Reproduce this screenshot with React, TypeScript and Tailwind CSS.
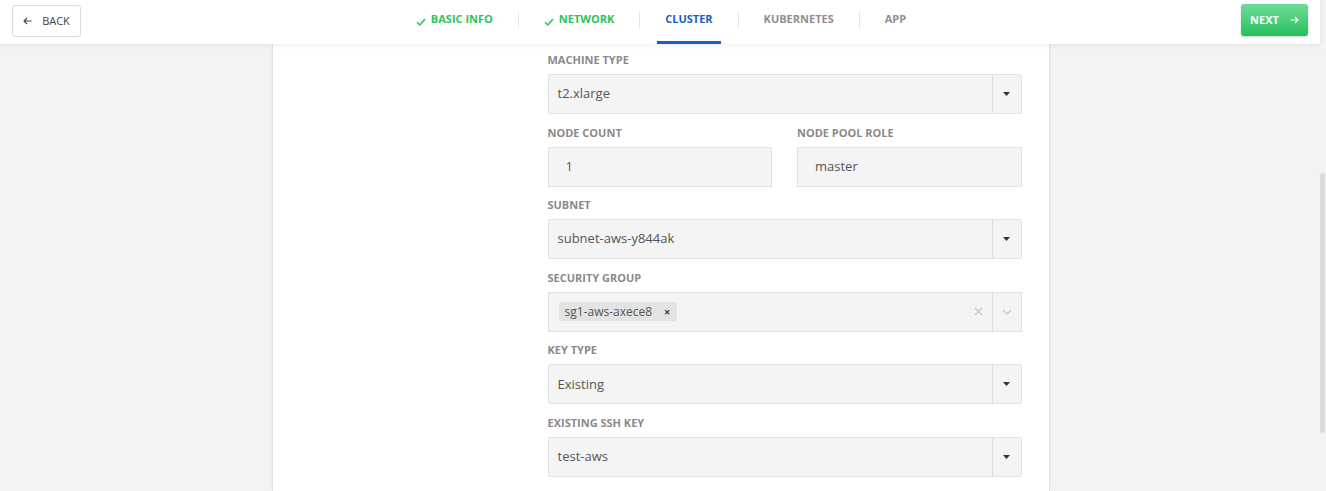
import React from 'react'

const font = { fontFamily: '"Open Sans", "Noto Sans", sans-serif' }

const Check = () => (
  <svg width="10" height="8" viewBox="0 0 10 8" className="mr-[5px]">
    <path d="M1 4.2 L3.8 7 L9 1" fill="none" stroke="currentColor" strokeWidth="1.6" />
  </svg>
)

const Caret = () => (
  <svg width="7" height="4" viewBox="0 0 7 4">
    <path d="M0 0 H7 L3.5 4 Z" fill="#333" />
  </svg>
)

const Label: React.FC<{ children: React.ReactNode }> = ({ children }) => (
  <div className="text-[11px] font-bold uppercase text-[#8a8a8a] leading-[14px] mb-[7px]">{children}</div>
)

const Select: React.FC<{ value: string }> = ({ value }) => (
  <div className="flex h-[40px] border border-[#e2e2e2] bg-[#f4f4f4] rounded-[2px]">
    <div className="flex-1 flex items-center pl-[9px] text-[13px] text-[#555]">{value}</div>
    <div className="w-[29px] border-l border-[#dcdcdc] flex items-center justify-center">
      <Caret />
    </div>
  </div>
)

const Field: React.FC<{ label: string; children: React.ReactNode }> = ({ label, children }) => (
  <div className="mb-[11.6px]">
    <Label>{label}</Label>
    {children}
  </div>
)

const Tab: React.FC<{ label: string; state: 'done' | 'active' | 'todo'; last?: boolean }> = ({ label, state, last }) => (
  <div className="flex items-center h-[44px]">
    <div
      className={
        'relative flex items-center h-full px-[8px] text-[11px] font-bold ' +
        (state === 'done' ? 'text-[#2fc35e]' : state === 'active' ? 'text-[#1a5fc7]' : 'text-[#8f8f8f]')
      }
    >
      {state === 'done' && <Check />}
      <span className="-mt-[5px] flex items-center">{label}</span>
      {state === 'active' && <div className="absolute left-0 right-0 bottom-0 h-[3px] bg-[#1a5fc7]" />}
    </div>
    {!last && <div className="w-px h-[16px] bg-[#e4e4e4] mx-[17px] -mt-[5px]" />}
  </div>
)

export default function App() {
  return (
    <div className="flex w-[1326px] h-[491px] bg-[#f3f3f3] overflow-hidden" style={font}>
      <div className="w-[1320px] flex flex-col">
        {/* header */}
        <div className="relative z-10 h-[44px] bg-white shadow-[0_1px_6px_rgba(0,0,0,0.08)] flex items-start justify-between px-[12px]">
          <button className="mt-[5px] w-[69px] h-[32px] border border-[#dcdcdc] rounded-[3px] flex items-center justify-center gap-[10px] text-[11px] text-[#444]">
            <svg width="9" height="8" viewBox="0 0 9 8">
              <path d="M8.5 4 H1 M4 1 L1 4 L4 7" fill="none" stroke="#444" strokeWidth="1.1" />
            </svg>
            BACK
          </button>
          <div className="flex">
            <Tab label="BASIC INFO" state="done" />
            <Tab label="NETWORK" state="done" />
            <Tab label="CLUSTER" state="active" />
            <Tab label="KUBERNETES" state="todo" />
            <Tab label="APP" state="todo" last />
          </div>
          <button className="mt-[4px] w-[67px] h-[32px] rounded-[3px] bg-gradient-to-b from-[#6ddc95] to-[#1ec05f] shadow-[0_1px_2px_rgba(0,0,0,0.2)] flex items-center justify-center gap-[11px] text-[11px] font-bold text-white">
            NEXT
            <svg width="9" height="8" viewBox="0 0 9 8">
              <path d="M0.5 4 H8 M5 1 L8 4 L5 7" fill="none" stroke="white" strokeWidth="1.2" />
            </svg>
          </button>
        </div>

        {/* body */}
        <div className="flex-1 flex justify-center">
          <div className="ml-[1px] w-[778px] bg-white border-x border-[#e3e3e3] shadow-[0_0_4px_rgba(0,0,0,0.04)] pl-[275px] pr-[27px] pt-[9px]">
            <Field label="Machine Type">
              <Select value="t2.xlarge" />
            </Field>
            <div className="grid grid-cols-2 gap-x-[25px]">
              <Field label="Node Count">
                <div className="h-[40px] border border-[#e2e2e2] bg-[#f4f4f4] flex items-center pl-[17px] text-[13px] text-[#555]">1</div>
              </Field>
              <Field label="Node Pool Role">
                <div className="h-[40px] border border-[#e2e2e2] bg-[#f4f4f4] flex items-center pl-[17px] text-[13px] text-[#555]">master</div>
              </Field>
            </div>
            <Field label="Subnet">
              <Select value="subnet-aws-y844ak" />
            </Field>
            <Field label="Security Group">
              <div className="flex h-[40px] border border-[#e2e2e2] bg-[#f4f4f4]">
                <div className="flex-1 flex items-center pl-[10px]">
                  <span className="flex items-center h-[19px] bg-[#e3e3e3] rounded-[2px] pl-[6px] pr-[7px] text-[12px] text-[#555]">
                    sg1-aws-axece8
                    <span className="ml-[12px] text-[11px] font-bold text-[#333]">×</span>
                  </span>
                </div>
                <div className="w-[27px] flex items-center justify-center">
                  <svg width="9" height="9" viewBox="0 0 9 9">
                    <path d="M1 1 L8 8 M8 1 L1 8" stroke="#c4c4c4" strokeWidth="1.3" />
                  </svg>
                </div>
                <div className="w-[29px] border-l border-[#dcdcdc] flex items-center justify-center">
                  <svg width="10" height="6" viewBox="0 0 10 6">
                    <path d="M1 1 L5 5 L9 1" fill="none" stroke="#c4c4c4" strokeWidth="1.2" />
                  </svg>
                </div>
              </div>
            </Field>
            <Field label="Key Type">
              <Select value="Existing" />
            </Field>
            <Field label="Existing SSH Key">
              <Select value="test-aws" />
            </Field>
          </div>
        </div>
      </div>
      {/* scrollbar */}
      <div className="w-[6px] pt-[173px]">
        <div className="h-[260px] w-[5px] rounded-full bg-[#dcdcdc]" />
      </div>
    </div>
  )
}
